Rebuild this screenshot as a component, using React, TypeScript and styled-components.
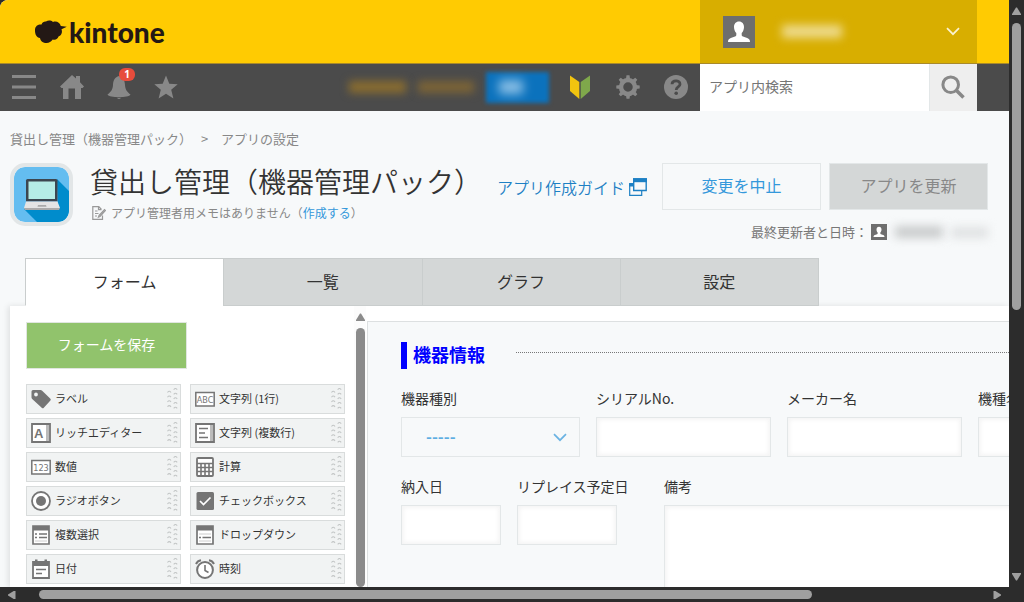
import React from "react";
import styled, { createGlobalStyle, css } from "styled-components";

const font = `"Noto Sans CJK JP", "Noto Sans", sans-serif`;

const GlobalStyle = createGlobalStyle`
  * { box-sizing: border-box; }
  body { margin: 0; background: #2c2c2c; font-family: ${font}; color: #333; }
  button, input, select, textarea { font-family: inherit; border-radius: 0; margin: 0; }
  a { text-decoration: none; }
`;

/* ---------- window frame and scroll bars ---------- */

const Frame = styled.div`
  display: grid;
  grid-template-columns: minmax(0, 1fr) 15px;
  grid-template-rows: minmax(0, 1fr) 15px;
  height: 100vh;
  overflow: hidden;
`;

const Page = styled.div`
  display: flex;
  flex-direction: column;
  overflow: hidden;
  background: #f7f9fa;
  border-top-left-radius: 8px;
`;

const ScrollTrack = styled.div<{ $horizontal?: boolean }>`
  display: flex;
  align-items: center;
  flex-direction: ${(p) => (p.$horizontal ? "row" : "column")};
  ${(p) =>
    p.$horizontal
      ? css`padding: 0 7px 0 7px; gap: 23px;`
      : css`padding: 7px 0 6px; gap: 8px;`}
`;

const ScrollSpace = styled.div`
  flex: 1;
  align-self: stretch;
  display: flex;
  flex-direction: inherit;
  align-items: center;
`;

const ScrollThumb = styled.div<{ $length: string; $horizontal?: boolean; $color?: string }>`
  border-radius: 5px;
  background: ${(p) => p.$color ?? "#9f9f9f"};
  width: ${(p) => (p.$horizontal ? p.$length : "9px")};
  height: ${(p) => (p.$horizontal ? "9px" : p.$length)};
`;

const turns = { up: 0, right: 90, down: 180, left: 270 };

const Arrow = styled.svg`
  flex: none;
`;

const ScrollArrow = ({ dir, color = "#9f9f9f" }: { dir: keyof typeof turns; color?: string }) => (
  <Arrow width="9" height="8" viewBox="0 0 9 8">
    <path d="M4 .5h1L9 7v1H0V7z" fill={color} transform={`rotate(${turns[dir]} 4.5 4)`} />
  </Arrow>
);

/* ---------- header ---------- */

const Header = styled.header`
  display: flex;
  justify-content: space-between;
  flex: none;
  height: 64px;
  padding: 0 32px 0 34px;
  background: #ffcb02;
  border-bottom: 1px solid #a8892b;
`;

const Logo = styled.a`
  display: flex;
  align-items: center;
  gap: 2px;
  color: #231815;
  font: 900 28px/32px Lato, "Open Sans", sans-serif;
`;

const UserMenu = styled.button`
  display: flex;
  align-items: center;
  width: 277px;
  padding: 0 17px 0 23px;
  border: 0;
  background: #d8ae00;
`;

const Avatar = styled.span<{ $size: number }>`
  display: flex;
  flex: none;
  width: ${(p) => p.$size}px;
  height: ${(p) => p.$size}px;
  background: #6e6e6e;
`;

const Masked = styled.span<{ $width: number; $height: number; $color: string; $blur: number }>`
  flex: none;
  width: ${(p) => p.$width}px;
  height: ${(p) => p.$height}px;
  background: ${(p) => p.$color};
  filter: blur(${(p) => p.$blur}px);
`;

const UserName = styled.span`
  display: flex;
  flex: 1;
  padding-left: 27px;
`;

const NavBar = styled.nav`
  display: flex;
  align-items: stretch;
  flex: none;
  height: 47px;
  padding-right: 32px;
  background: #4b4b4b;
`;

const NavGroup = styled.div`
  display: flex;
  align-items: center;
  padding-bottom: 1px;
`;

const NavButton = styled.button`
  position: relative;
  display: flex;
  align-items: center;
  justify-content: center;
  width: 48px;
  height: 46px;
  padding: 0;
  border: 0;
  background: none;
`;

const NavLeft = styled(NavGroup)`
  flex: 1;
  ${NavButton} { width: 47px; }
  ${NavButton}:first-child { width: 48px; }
`;

const Badge = styled.span`
  position: absolute;
  top: 4px;
  left: 24px;
  width: 16px;
  height: 13px;
  border-radius: 6px;
  background: #e74c3c;
  color: #fff;
  font: bold 10px/13px "Noto Sans", sans-serif;
  text-align: center;
`;

const Trial = styled(NavGroup)`
  gap: 12px;
  margin-right: 7px;
`;

const TrialButton = styled.button`
  display: flex;
  align-items: center;
  justify-content: center;
  width: 63px;
  height: 31px;
  padding: 0 14px 0 0;
  border: 0;
  background: #0b72bd;
  filter: blur(2px);
`;

const Search = styled.form`
  display: flex;
  width: 277px;
  background: #fff;
`;

const SearchInput = styled.input`
  flex: 1;
  min-width: 0;
  padding: 0 9px 3px;
  border: 0;
  background: #fff;
  color: #333;
  font-size: 14px;
  &::placeholder { color: #757575; }
`;

const SearchButton = styled.button`
  display: flex;
  align-items: center;
  justify-content: center;
  width: 48px;
  padding: 0 1px 1px 0;
  border: 0;
  border-left: 1px solid #e3e7e8;
  background: #eee;
`;

/* ---------- app heading ---------- */

const Breadcrumb = styled.nav`
  display: flex;
  flex: none;
  padding: 20px 10px 16px;
  color: #888;
  font-size: 13px;
  line-height: 16px;
  a { color: inherit; }
  span { width: 29px; padding-left: 9px; }
`;

const Heading = styled.section`
  display: flex;
  flex: none;
  align-items: flex-start;
  height: 95px;
  padding: 0 21px 0 10px;
`;

const AppIcon = styled.div`
  display: flex;
  flex: none;
  width: 63px;
  height: 63px;
  margin-right: 17px;
  border: 4px solid #e2e6e7;
  border-radius: 15px;
  overflow: hidden;
`;

const TitleRow = styled.div`
  display: flex;
  align-items: center;
  white-space: nowrap;
`;

const Title = styled.h1`
  margin: 0 15px 0 0;
  color: #333;
  font-size: 28px;
  font-weight: 350;
  line-height: 34px;
`;

const GuideLink = styled.a`
  display: flex;
  align-items: center;
  gap: 4px;
  padding-top: 12px;
  color: #1d80c4;
  font-size: 16px;
  font-weight: 350;
  line-height: 24px;
`;

const Memo = styled.p`
  display: flex;
  align-items: center;
  gap: 5px;
  margin: 4px 0 0 2px;
  color: #888;
  font-size: 12px;
  line-height: 20px;
  a { color: #3498db; }
`;

const Actions = styled.div`
  display: flex;
  flex-direction: column;
  margin-left: auto;
`;

const ActionRow = styled.div`
  display: flex;
  gap: 8px;
`;

const ActionButton = styled.button<{ $muted?: boolean }>`
  width: 159px;
  height: 47px;
  padding: 0 0 3px;
  border: 1px solid #e3e7e8;
  background: ${(p) => (p.$muted ? "#d4d7d7" : "#f7f9fa")};
  color: ${(p) => (p.$muted ? "#888" : "#3498db")};
  font-size: 16px;
  line-height: 24px;
`;

const Updated = styled.div`
  display: flex;
  align-items: center;
  align-self: flex-end;
  margin-top: 12px;
  gap: 8px;
  color: #777;
  font-size: 13px;
  line-height: 20px;
`;

const UpdatedLabel = styled.span`
  display: flex;
  align-items: center;
  gap: 3px;
`;

/* ---------- tabs ---------- */

const Tabs = styled.div`
  display: flex;
  flex: none;
  width: 100%;
  max-width: 819px;
  padding-left: 25px;
  position: relative;
`;

const Tab = styled.button<{ $active?: boolean }>`
  flex: 1;
  height: 48px;
  padding: 0 0 2px;
  border: 1px solid #c9cdcd;
  border-right: 0;
  border-bottom-color: ${(p) => (p.$active ? "#fff" : "#c9cdcd")};
  background: ${(p) => (p.$active ? "#fff" : "#d4d7d7")};
  color: #333;
  font-size: 16px;
  line-height: 24px;
  &:last-child { border-right: 1px solid #c9cdcd; }
`;

/* ---------- form editor ---------- */

const Editor = styled.main`
  display: flex;
  flex: 1;
  min-height: 0;
  margin-left: 10px;
  background: #fff;
  box-shadow: -2px 0 6px rgba(0, 0, 0, 0.1);
`;

const Palette = styled.div`
  flex: none;
  width: 344px;
  padding: 16px 0 0 16px;
`;

const SaveButton = styled.button`
  display: block;
  width: 161px;
  height: 47px;
  margin-bottom: 15px;
  padding: 0 0 3px;
  border: 1px solid #e0e6e0;
  background: #91c36c;
  color: #fff;
  font-size: 14px;
`;

const FieldGrid = styled.div`
  display: grid;
  grid-template-columns: 155px 155px;
  gap: 4px 9px;
`;

const FieldItem = styled.button`
  display: flex;
  align-items: center;
  height: 30px;
  padding: 0 1px 0 4px;
  border: 1px solid #d9dcdc;
  background: #f1f3f3;
  color: #333;
  font-size: 11px;
  line-height: 16px;
`;

const FieldName = styled.span`
  flex: 1;
  padding: 0 0 2px 4px;
  text-align: left;
  white-space: nowrap;
`;

const PaletteScroll = styled.div`
  display: flex;
  flex: none;
  flex-direction: column;
  align-items: center;
  gap: 7px;
  width: 12px;
  margin-right: 1px;
  padding-top: 7px;
  background: #fcfcfc;
`;

const Canvas = styled.section`
  flex: 1;
  min-width: 0;
  margin-top: 15px;
  padding: 20px 0 0 33px;
  border-top: 1px solid #dde0e1;
  border-left: 1px solid #dde0e1;
  background: #f7f9fa;
  overflow: hidden;
`;

const GroupHeading = styled.div`
  display: flex;
  height: 27px;
  margin-bottom: 21px;
`;

const GroupTitle = styled.h2`
  width: 115px;
  margin: 0;
  padding-left: 6px;
  border-left: 6px solid #00f;
  color: #00f;
  font-size: 18px;
  font-weight: bold;
  line-height: 24px;
`;

const Rule = styled.hr`
  flex: 1;
  height: 1px;
  margin: 10px 0 0;
  border: 0;
  border-top: 1px dotted #777;
`;

const FieldRow = styled.div`
  display: flex;
  gap: 16px;
  margin-bottom: 21px;
`;

const Field = styled.div<{ $width: number }>`
  display: flex;
  flex: none;
  flex-direction: column;
  width: ${(p) => p.$width}px;
`;

const Label = styled.label`
  height: 27px;
  color: #333;
  font-size: 14px;
  line-height: 16px;
  white-space: nowrap;
`;

const control = css`
  border: 1px solid #e3e7e8;
  background: #fff;
  box-shadow: 2px 2px 4px #f5f5f5 inset, -2px -2px 4px #f5f5f5 inset;
`;

const TextInput = styled.input<{ $width: number }>`
  ${control}
  width: ${(p) => p.$width}px;
  height: 40px;
  padding: 0 8px;
`;

const TextArea = styled.textarea`
  ${control}
  height: 125px;
  padding: 8px;
  resize: none;
`;

const SelectBox = styled.div`
  display: grid;
  align-items: center;
  > * { grid-area: 1 / 1; }
  svg { justify-self: end; margin-right: 13px; pointer-events: none; }
`;

const Select = styled.select`
  appearance: none;
  width: 100%;
  height: 40px;
  padding: 0 24px 2px;
  border: 1px solid #e3e7e8;
  background: #f7f9fa;
  color: #5dade2;
  font-size: 16px;
  font-weight: bold;
`;

/* ---------- drawings ---------- */

const Person = () => (
  <svg width="100%" height="100%" viewBox="0 0 32 32" fill="#fff">
    <path d="M16 5.500c3.200 0 5 2.400 5 5.500 0 2.600-1 4.700-2.300 6v2c0 .8.500 1.300 1.300 1.600l4.200 1.500c2 .8 2.800 2 2.800 3.900H5c0-1.900.8-3.100 2.800-3.900l4.200-1.500c.8-.3 1.300-.8 1.300-1.600v-2c-1.300-1.300-2.300-3.400-2.300-6 0-3.100 1.800-5.500 5-5.500z" />
  </svg>
);

const Chevron = ({ color }: { color: string }) => (
  <svg width="14" height="9" viewBox="0 0 14 9" fill="none" stroke={color} strokeWidth="1.700">
    <path d="M1 1.200l6 6 6-6" />
  </svg>
);

const LogoCloud = () => (
  <svg width="33" height="24" viewBox="0 0 33 24" fill="#231815">
    <path d="M1 10C1 6 4.200 4.200 7.500 4.500 8.500 2 10 1.300 12 1.500 14 .2 17 .2 19 2c3.500-1.200 6.800.5 7.800 4l6 .8-5.300 2.400c1.300 3.300-.3 6.300-3 7.300-.6 2.500-3 3.800-5.800 3-1.700 2.300-3.400 3.500-6.200 3.500-3.300 0-6.200-2-6.500-5C2.800 17.500.8 14.500 1 10z" />
  </svg>
);

const Grip = () => (
  <svg width="12" height="22" viewBox="0 0 12 22" fill="none" stroke="#c3c6c6" strokeWidth="1.100">
    {[4.500, 9.200, 14, 18.800].map((y) => (
      <path key={y} d={`M.5 ${y}q1.700-2.400 3.500 0`} />
    ))}
    {[1.700, 6.400, 11, 15.700, 20.400].map((y) => (
      <path key={y} d={`M6.700 ${y}q1.700-2.400 3.500 0`} />
    ))}
  </svg>
);

const g = "#757575";
const glyphText = { fontFamily: '"DejaVu Sans Condensed", "Liberation Sans", sans-serif', fill: g };

const fieldIcons: Record<string, React.ReactNode> = {
  label: (
    <path fillRule="evenodd" fill={g} d="M2 1h7.500q.8 0 1.400.6l8.500 8.200q.7.800 0 1.600l-6.800 7.500q-.8.700-1.600 0L1.200 10q-.7-.7-.7-1.500V2.500Q.5 1 2 1zM5 3.600a1.900 1.900 0 100 3.800 1.900 1.900 0 000-3.800z" />
  ),
  rich: (
    <>
      <path d="M1 1h18v18H1z" fill="#fff" stroke={g} strokeWidth="1.800" />
      <path d="M15 2h3v16h-3z" fill="#bbb" />
      <text x="3" y="14.500" fontSize="13" fontWeight="bold" fontFamily='"Liberation Sans", sans-serif' fill={g}>A</text>
    </>
  ),
  number: (
    <>
      <path d="M.8 3.500h18.400v13.500H.8z" fill="#fff" stroke={g} strokeWidth="1.500" />
      <text x="10" y="13.500" textAnchor="middle" fontSize="9" {...glyphText}>123</text>
    </>
  ),
  radio: (
    <>
      <circle cx="10" cy="10" r="9" fill="#fff" stroke={g} strokeWidth="1.800" />
      <circle cx="10" cy="10" r="5" fill={g} />
    </>
  ),
  multi: (
    <>
      <path d="M2 1h16v18H2z" fill="#fff" stroke={g} strokeWidth="1.700" />
      <path d="M2 1h16v4.500H2z" fill={g} />
      <path d="M4 9h2M8 9h8M4 12.500h2M8 12.500h8" stroke={g} strokeWidth="1.300" />
      <path d="M4 16h12" stroke="#ccc" />
    </>
  ),
  date: (
    <>
      <path d="M2 3h16v16H2z" fill="#fff" stroke={g} strokeWidth="1.800" />
      <path d="M2 3h16v4H2zM4 .5h2.500V5H4zM13.500.5H16V5h-2.500z" fill={g} />
      <path d="M5 10.500h10M5 14.500h6" stroke={g} strokeWidth="1.600" />
    </>
  ),
  text: (
    <>
      <path d="M.8 3.500h18.400v13.500H.8z" fill="#fff" stroke={g} strokeWidth="1.500" />
      <text x="10" y="13.500" textAnchor="middle" fontSize="9" {...glyphText}>ABC</text>
    </>
  ),
  multiline: (
    <>
      <path d="M1 1h18v18H1z" fill="#fff" stroke={g} strokeWidth="1.800" />
      <path d="M15 2h3v16h-3z" fill="#bbb" />
      <path d="M4 5.500h9M4 10h6M4 14.500h9" stroke={g} strokeWidth="1.600" />
    </>
  ),
  calc: (
    <>
      <rect x="2" y="1" width="16" height="18" rx="1" fill="#fff" stroke={g} strokeWidth="1.800" />
      <path d="M2 6.500h16M2 10.500h16M2 14.500h16M6 6.500V19M10 6.500V19M14 6.500V19" stroke={g} strokeWidth="1.600" />
    </>
  ),
  check: (
    <>
      <rect x="1.500" y="1" width="17.500" height="18" rx="1.500" fill={g} />
      <path d="M5 10l3.500 3.500L15.500 6.500" fill="none" stroke="#fff" strokeWidth="1.700" />
    </>
  ),
  dropdown: (
    <>
      <path d="M2 1h16v18H2z" fill="#fff" stroke={g} strokeWidth="1.700" />
      <path d="M2 1h16v4.500H2z" fill={g} />
      <path d="M4 12.500h2M7.500 12.500h8.500" stroke={g} strokeWidth="1.500" />
      <path d="M4 9h12M4 16h12" stroke="#ccc" />
    </>
  ),
  time: (
    <>
      <circle cx="10" cy="11" r="7.900" fill="#fff" stroke={g} strokeWidth="2" />
      <path d="M10 6v5.500l3.500 2" fill="none" stroke={g} strokeWidth="1.600" />
      <path d="M1 5Q2.500 1.600 6 1.200M19 5Q17.500 1.600 14 1.200" fill="none" stroke={g} strokeWidth="2" />
    </>
  ),
};

const paletteFields: [string, string][] = [
  ["label", "ラベル"],
  ["text", "文字列 (1行)"],
  ["rich", "リッチエディター"],
  ["multiline", "文字列 (複数行)"],
  ["number", "数値"],
  ["calc", "計算"],
  ["radio", "ラジオボタン"],
  ["check", "チェックボックス"],
  ["multi", "複数選択"],
  ["dropdown", "ドロップダウン"],
  ["date", "日付"],
  ["time", "時刻"],
];

const gearTeeth = [0, 45, 90, 135, 180, 225, 270, 315];

const InputField = ({ id, label, width, fieldWidth = width }: { id: string; label: string; width: number; fieldWidth?: number }) => (
  <Field $width={fieldWidth}>
    <Label htmlFor={id}>{label}</Label>
    <TextInput id={id} type="text" $width={width} />
  </Field>
);

export default function App() {
  return (
    <>
      <GlobalStyle />
      <Frame>
        <Page>
          <Header>
            <Logo href="#">
              <LogoCloud />
              kintone
            </Logo>
            <UserMenu type="button" aria-label="ユーザーメニュー">
              <Avatar $size={32}><Person /></Avatar>
              <UserName>
                <Masked $width={60} $height={13} $color="#eedb8d" $blur={5} />
              </UserName>
              <Chevron color="#fbf3d0" />
            </UserMenu>
          </Header>

          <NavBar>
            <NavLeft>
              <NavButton type="button" aria-label="メニュー">
                <svg width="24" height="24" viewBox="0 0 24 24" fill="#888">
                  <path d="M0 0h24v3H0zM0 10.500h24v3H0zM0 21h24v3H0z" />
                </svg>
              </NavButton>
              <NavButton type="button" aria-label="ホーム">
                <svg width="24" height="24" viewBox="0 0 24 24" fill="#888">
                  <path d="M12 0l4 3.500V1h4v6.200l4 4.300-1.500 1.500H21v11h-6V13.500H8.500V24H3V13H1.500L0 11.500z" />
                </svg>
              </NavButton>
              <NavButton type="button" aria-label="通知">
                <svg width="24" height="24" viewBox="0 0 24 24" fill="#888">
                  <path d="M12 1c4 1 5.800 4 6 9 .3 4 1.500 6.500 5.500 9.500-1 2-6 2.500-11.500 2.500S1.500 21.500.5 19.500c4-3 5.200-5.500 5.500-9.500.2-5 2-8 6-9zM9.500 22.700h5l-2.500 1.500z" />
                </svg>
                <Badge>1</Badge>
              </NavButton>
              <NavButton type="button" aria-label="お気に入り">
                <svg width="24" height="24" viewBox="0 0 24 24" fill="#888">
                  <path d="M12 .5l3.300 8.200 8.400.5-6.500 5.600 2.200 8.700L12 18.700l-7.400 4.800 2.200-8.700L.3 9.200l8.400-.5z" />
                </svg>
              </NavButton>
            </NavLeft>
            <Trial>
              <Masked $width={57} $height={12} $color="#8a6d2f" $blur={4} />
              <Masked $width={56} $height={12} $color="#7c6436" $blur={4} />
              <TrialButton type="button" aria-label="購入">
                <Masked $width={24} $height={14} $color="#8cc0e6" $blur={5} />
              </TrialButton>
            </Trial>
            <NavGroup>
              <NavButton type="button" aria-label="はじめに">
                <svg width="22" height="24" viewBox="0 0 22 24">
                  <path d="M1 .5L10.300 7v17L1 16z" fill="#f1c40f" />
                  <path d="M21 .5L11.700 7v17L21 16z" fill="#7fa84b" />
                </svg>
              </NavButton>
              <NavButton type="button" aria-label="設定">
                <svg width="24" height="24" viewBox="0 0 24 24">
                  <circle cx="12" cy="12" r="7" fill="none" stroke="#888" strokeWidth="4.500" />
                  {gearTeeth.map((a) => (
                    <path key={a} d="M10 4L10.500.3h3L14 4z" fill="#888" transform={`rotate(${a} 12 12)`} />
                  ))}
                </svg>
              </NavButton>
              <NavButton type="button" aria-label="ヘルプ">
                <svg width="24" height="24" viewBox="0 0 24 24">
                  <circle cx="12" cy="12" r="12" fill="#888" />
                  <path d="M8 9.200C8.200 4.800 16 4.800 16 9.200c0 2.800-3.800 2.800-3.800 5.800" fill="none" stroke="#4b4b4b" strokeWidth="2.800" />
                  <circle cx="12.200" cy="18.200" r="1.800" fill="#4b4b4b" />
                </svg>
              </NavButton>
            </NavGroup>
            <Search role="search">
              <SearchInput type="text" placeholder="アプリ内検索" aria-label="アプリ内検索" />
              <SearchButton type="button" aria-label="検索">
                <svg width="24" height="24" viewBox="0 0 24 24" fill="none" stroke="#888">
                  <circle cx="9.700" cy="9.700" r="7.800" strokeWidth="3" />
                  <path d="M15.500 15.500l7 7" strokeWidth="3.600" />
                </svg>
              </SearchButton>
            </Search>
          </NavBar>

          <Breadcrumb>
            <a href="#">貸出し管理（機器管理パック）</a>
            <span>&gt;</span>
            アプリの設定
          </Breadcrumb>

          <Heading>
            <AppIcon>
              <svg width="55" height="55" viewBox="0 0 55 55">
                <rect width="55" height="55" rx="11" fill="#64bdf0" />
                <path d="M43 12l12 12v20a11 11 0 01-11 11H23L10 42l34-1z" fill="#008ccc" />
                <path d="M13.500 12h28.500q1.500 0 1.500 1.500V34.500H12V13.500q0-1.500 1.500-1.500z" fill="#3c4650" />
                <path d="M14.500 14.500H41V32H14.500z" fill="#b5ece6" />
                <path d="M12 34.500h31.500L46 41H10z" fill="#e4e4e4" />
                <path d="M10 41h36l-1 2H11z" fill="#aaa" />
                <path d="M24 38h8l.5 1.700h-9z" fill="#aaa" />
              </svg>
            </AppIcon>
            <div>
              <TitleRow>
                <Title>貸出し管理（機器管理パック）</Title>
                <GuideLink href="#">
                  アプリ作成ガイド
                  <svg width="18" height="18" viewBox="0 0 18 18" fill="#f7f9fa" stroke="#1d80c4">
                    <path d="M.7 5.500h12v11.800H.7z" strokeWidth="1.200" />
                    <path d="M.2 5.500h12.500v3H.2z" fill="#1d80c4" stroke="none" />
                    <path d="M4.700 1h12.500v11.500H4.700z" strokeWidth="1.400" />
                    <path d="M4 .2h14v4H4z" fill="#1d80c4" stroke="none" />
                  </svg>
                </GuideLink>
              </TitleRow>
              <Memo>
                <svg width="14" height="14" viewBox="0 0 14 14" fill="none" stroke="#999" strokeWidth="1.200">
                  <path d="M10.500 9.500v3.800H.8V.7h6l2.700 2.800M6.500.7v3h3M3 5h2.500M3 7.500h3.500M3 10h2" />
                  <path d="M7 9.500L12.500 3.500l1 1L8 10.500l-1.600.6z" />
                </svg>
                <span>アプリ管理者用メモはありません（<a href="#">作成する</a>）</span>
              </Memo>
            </div>
            <Actions>
              <ActionRow>
                <ActionButton type="button">変更を中止</ActionButton>
                <ActionButton type="button" $muted>アプリを更新</ActionButton>
              </ActionRow>
              <Updated>
                <UpdatedLabel>
                  最終更新者と日時：
                  <Avatar $size={16}><Person /></Avatar>
                </UpdatedLabel>
                <Masked $width={48} $height={12} $color="#c9cbcc" $blur={5} />
                <Masked $width={37} $height={11} $color="#dfe1e2" $blur={5} />
              </Updated>
            </Actions>
          </Heading>

          <Tabs role="tablist">
            <Tab type="button" role="tab" aria-selected="true" $active>フォーム</Tab>
            <Tab type="button" role="tab" aria-selected="false">一覧</Tab>
            <Tab type="button" role="tab" aria-selected="false">グラフ</Tab>
            <Tab type="button" role="tab" aria-selected="false">設定</Tab>
          </Tabs>

          <Editor>
            <Palette>
              <SaveButton type="button">フォームを保存</SaveButton>
              <FieldGrid>
                {paletteFields.map(([icon, name]) => (
                  <FieldItem key={icon} type="button">
                    <svg width="20" height="20" viewBox="0 0 20 20">{fieldIcons[icon]}</svg>
                    <FieldName>{name}</FieldName>
                    <Grip />
                  </FieldItem>
                ))}
              </FieldGrid>
            </Palette>
            <PaletteScroll>
              <ScrollArrow dir="up" color="#8b8b8b" />
              <ScrollThumb $length="100%" $color="#8b8b8b" />
            </PaletteScroll>
            <Canvas>
              <GroupHeading>
                <GroupTitle>機器情報</GroupTitle>
                <Rule />
              </GroupHeading>
              <FieldRow>
                <Field $width={179}>
                  <Label htmlFor="kind">機器種別</Label>
                  <SelectBox>
                    <Select id="kind"><option>-----</option></Select>
                    <Chevron color="#6bb3e3" />
                  </SelectBox>
                </Field>
                <InputField id="serial" label="シリアルNo." width={175} />
                <InputField id="maker" label="メーカー名" width={175} />
                <InputField id="model" label="機種名" width={175} />
              </FieldRow>
              <FieldRow>
                <InputField id="delivered" label="納入日" width={100} />
                <InputField id="replace" label="リプレイス予定日" width={100} fieldWidth={131} />
                <Field $width={520}>
                  <Label htmlFor="note">備考</Label>
                  <TextArea id="note" />
                </Field>
              </FieldRow>
            </Canvas>
          </Editor>
        </Page>

        <ScrollTrack>
          <ScrollArrow dir="up" />
          <ScrollSpace><ScrollThumb $length="53%" /></ScrollSpace>
          <ScrollArrow dir="down" />
        </ScrollTrack>
        <ScrollTrack $horizontal>
          <ScrollArrow dir="left" />
          <ScrollSpace><ScrollThumb $horizontal $length="83%" /></ScrollSpace>
          <ScrollArrow dir="right" />
        </ScrollTrack>
      </Frame>
    </>
  );
}
